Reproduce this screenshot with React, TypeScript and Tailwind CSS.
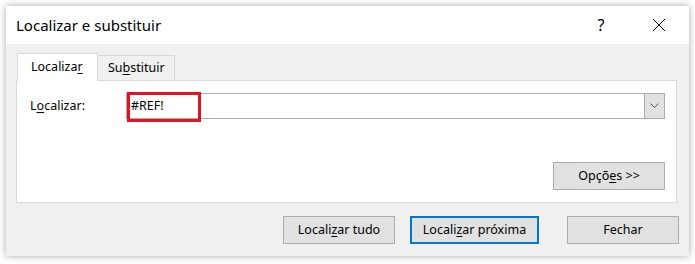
export default function App() {
  const font = { fontFamily: '"Segoe UI", "Noto Sans", "Open Sans", sans-serif' };
  return (
    <div className="w-[695px] h-[264px] bg-white p-[6px]" style={font}>
      <div className="w-[683px] h-[250px] bg-[#f0f0f0] flex flex-col shadow-[0_0_7px_rgba(0,0,0,0.35)] text-black">
        {/* title bar */}
        <div className="h-[38px] bg-white flex items-center pl-[10px] shrink-0">
          <span className="text-[15px] leading-none">Localizar e substituir</span>
          <span className="ml-auto text-[16px] leading-none w-[12px] text-center">?</span>
          <span className="ml-[45px] mr-[23px] w-[14px] h-[14px] flex items-center justify-center">
            <svg width="14" height="14" viewBox="0 0 14 14">
              <path d="M1 1 L13 13 M13 1 L1 13" stroke="#000" strokeWidth="1" fill="none" />
            </svg>
          </span>
        </div>
        {/* body */}
        <div className="pl-[10px] pr-[12px] pt-[9px] flex flex-col">
          <div className="flex pl-[1px] h-[27px] items-end">
            <div className="relative z-10 w-[81px] h-[28px] -mb-px bg-white border border-b-0 border-[#d9d9d9] flex items-center pl-[13px] text-[12.5px]">
              <span>
                Localiza<span className="underline underline-offset-2">r</span>
              </span>
            </div>
            <div className="w-[77px] h-[25px] border border-l-0 border-b-0 border-[#d9d9d9] flex items-center pl-[10px] text-[12.5px]">
              <span>
                Su<span className="underline underline-offset-2">b</span>stituir
              </span>
            </div>
          </div>
          <div className="h-[123px] bg-white border border-[#d9d9d9] flex flex-col pl-[13px] pr-[11px] pt-[12px]">
            <div className="flex items-center h-[26px]">
              <span className="w-[96px] text-[12.5px]">
                L<span className="underline underline-offset-2">o</span>calizar:
              </span>
              <div className="relative flex-1 h-[26px] border border-[#adadad] flex items-center">
                <span className="pl-[4px] text-[12.5px]">#REF!</span>
                <div className="ml-auto w-[21px] h-[26px] -mr-px -my-px border border-[#adadad] bg-[#e1e1e1] flex items-center justify-center">
                  <svg width="9" height="6" viewBox="0 0 9 6">
                    <path d="M0.5 0.5 L4.5 4.5 L8.5 0.5" stroke="#555" strokeWidth="1" fill="none" />
                  </svg>
                </div>
                <div className="absolute left-0 top-[-2px] w-[74px] h-[30px] border-[3px] border-[#e81123]" />
              </div>
            </div>
            <div className="flex justify-end mt-[43px]">
              <button className="w-[112px] h-[28px] bg-[#e1e1e1] border border-[#adadad] text-[12.5px] flex items-center justify-center">
                <span>
                  Opçõ<span className="underline underline-offset-2">e</span>s &gt;&gt;
                </span>
              </button>
            </div>
          </div>
        </div>
        {/* buttons */}
        <div className="flex justify-end pr-[10px] mt-[13px] gap-[15px]">
          <button className="w-[112px] h-[28px] bg-[#e1e1e1] border border-[#adadad] text-[12.5px] flex items-center justify-center">
            <span>
              Locali<span className="underline underline-offset-2">z</span>ar tudo
            </span>
          </button>
          <button className="w-[129px] h-[28px] bg-[#e1e1e1] border-2 border-[#0078d7] text-[12.5px] flex items-center justify-center mr-[13px]">
            <span>
              Locali<span className="underline underline-offset-2">z</span>ar próxima
            </span>
          </button>
          <button className="w-[112px] h-[28px] bg-[#e1e1e1] border border-[#adadad] text-[12.5px] flex items-center justify-center">
            Fechar
          </button>
        </div>
      </div>
    </div>
  );
}
